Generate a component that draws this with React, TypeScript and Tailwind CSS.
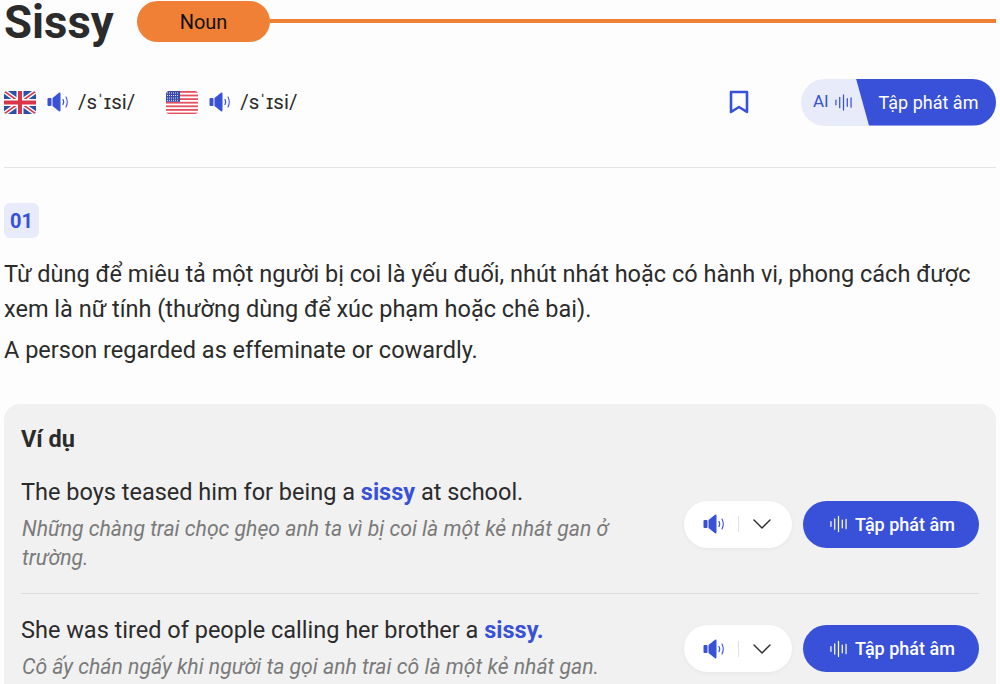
import React from 'react';

const BLUE = '#3851d8';

const Speaker = ({ className = 'w-[23px] h-[20px]' }: { className?: string }) => (
  <svg viewBox="0 0 23 20" className={className} fill="none">
    <rect x="0.5" y="6" width="4" height="8" rx="1" fill={BLUE} />
    <path d="M5.5 6 L12 0.8 Q13.5 0 13.5 2 V18 Q13.5 20 12 19.2 L5.5 14 Z" fill={BLUE} />
    <path d="M16 7.5 Q17.5 10 16 12.5" stroke={BLUE} strokeWidth="1.3" strokeLinecap="round" />
    <path d="M19 5 Q21.5 10 19 15" stroke={BLUE} strokeWidth="1.1" strokeLinecap="round" />
  </svg>
);

const Wave = ({ color, className }: { color: string; className: string }) => (
  <svg viewBox="0 0 18 18" className={className} stroke={color} strokeWidth="1.3" strokeLinecap="round">
    <path d="M1 6.5v5M5 3.5v11M9 1v16M13 5v8M17 4v10" />
  </svg>
);

const UkFlag = () => (
  <svg viewBox="0 0 32 23" className="w-[32px] h-[23px]">
    <clipPath id="uk-clip">
      <rect width="32" height="23" rx="3.5" />
    </clipPath>
    <g clipPath="url(#uk-clip)">
      <rect width="32" height="23" fill="#2b4fa8" />
      <path d="M0 0 L32 23 M32 0 L0 23" stroke="#fff" strokeWidth="4.5" />
      <path d="M0 0 L32 23 M32 0 L0 23" stroke="#d8344a" strokeWidth="1.6" />
      <path d="M16 0 V23 M0 11.5 H32" stroke="#fff" strokeWidth="7" />
      <path d="M16 0 V23 M0 11.5 H32" stroke="#d8344a" strokeWidth="4" />
    </g>
  </svg>
);

const UsFlag = () => (
  <svg viewBox="0 0 32 23" className="w-[32px] h-[23px]">
    <clipPath id="us-clip">
      <rect width="32" height="23" rx="3.5" />
    </clipPath>
    <g clipPath="url(#us-clip)">
      <rect width="32" height="23" fill="#fff" />
      {[0, 3.6, 7.2, 10.8, 14.4, 18, 21.6].map((y) => (
        <rect key={y} y={y} width="32" height="1.8" fill="#e4525f" />
      ))}
      <rect width="14" height="10.8" fill="#3a4aa8" />
      <path d="M1 2h12M1 4.5h12M1 7h12M1 9.3h12" stroke="#dfe3f5" strokeWidth="1" strokeDasharray="1 1" />
    </g>
  </svg>
);

const Phonetic = () => (
  <span className="text-[20.5px] leading-none text-[#2b2b2b]">/sˈɪsi/</span>
);

const ExampleActions = () => (
  <div className="flex items-center gap-[11px] shrink-0">
    <div className="flex items-center w-[108px] h-[47px] bg-white rounded-full pl-[19px] shadow-[0_1px_4px_rgba(0,0,0,0.05)]">
      <Speaker />
      <div className="w-px h-[16px] bg-[#e2e2e2] ml-[12px] mr-[14px]" />
      <svg viewBox="0 0 18 10" className="w-[18px] h-[10px]" fill="none" stroke="#2b2b2b" strokeWidth="1.4" strokeLinecap="round" strokeLinejoin="round">
        <path d="M1 1 L9 9 L17 1" />
      </svg>
    </div>
    <button className="flex items-center justify-center gap-[8px] w-[176px] h-[47px] pl-[3px] rounded-full text-white text-[18px] font-medium bg-[#3851d8]">
      <Wave color="#ffffff" className="w-[17px] h-[18px]" />
      Tập phát âm
    </button>
  </div>
);

export default function App() {
  return (
    <div className="h-[684px] overflow-hidden bg-[#fdfdfd] pl-[4px] pr-[4px] font-['Roboto',sans-serif] text-[#2b2b2b]">
      {/* Word + part of speech */}
      <div className="flex items-start h-[46px]">
        <h1 className="text-[45.5px] font-bold leading-none w-[133px]">Sissy</h1>
        <div className="flex items-center justify-center w-[133px] h-[41px] mt-[1px] rounded-full bg-[#f08036] text-[#111] text-[20px]">
          Noun
        </div>
        <div className="flex-1 h-[4px] bg-[#f08036] mt-[19px]" />
      </div>

      {/* Pronunciation */}
      <div className="flex items-center h-[46px] mt-[34px] pb-[2px]">
        <div className="flex items-center">
          <UkFlag />
          <div className="ml-[11px] mr-[8px]"><Speaker /></div>
          <Phonetic />
        </div>
        <div className="flex items-center ml-[31px]">
          <UsFlag />
          <div className="ml-[11px] mr-[8px]"><Speaker /></div>
          <Phonetic />
        </div>
        <svg viewBox="0 0 20 24" className="w-[20px] h-[24px] ml-auto mr-[52px]" fill="none" stroke={BLUE} strokeWidth="2.6" strokeLinejoin="round">
          <path d="M2 2 H18 V22 L10 17 L2 22 Z" />
        </svg>
        <div className="relative flex items-center w-[195px] h-[47px] rounded-full bg-[#e8ebf9] overflow-hidden">
          <span className="flex items-center gap-[6px] pl-[12px] text-[17px] text-[#3851d8]">
            AI
            <Wave color={BLUE} className="w-[17px] h-[17px]" />
          </span>
          <div className="absolute inset-y-0 right-0 left-[55px] flex items-center justify-center pl-[5px] text-[18px] text-white bg-[#3851d8] [clip-path:polygon(0_0,100%_0,100%_100%,13px_100%)]">
            Tập phát âm
          </div>
        </div>
      </div>

      <div className="h-px bg-[#e4e4e4] mt-[41px]" />

      {/* Sense */}
      <div className="flex items-center justify-center w-[35px] h-[35px] mt-[35px] rounded-[6px] bg-[#e8ebf9] text-[#3851d8] text-[20px] font-bold">
        01
      </div>
      <p className="text-[23.5px] leading-[35px] mt-[19px]">
        Từ dùng để miêu tả một người bị coi là yếu đuối, nhút nhát hoặc có hành vi, phong cách được xem là nữ tính (thường dùng để xúc phạm hoặc chê bai).
      </p>
      <p className="text-[23.5px] leading-[35px] mt-[6px]">A person regarded as effeminate or cowardly.</p>

      {/* Examples */}
      <div className="mt-[36px] rounded-[16px] bg-[#f1f1f1] px-[17px] pt-[20px] pb-[40px]">
        <h2 className="text-[23.5px] font-bold leading-[30px]">Ví dụ</h2>
        <div className="flex items-center justify-between pt-[22px] pb-[21px] border-b border-[#dcdcdc]">
          <div className="w-[600px]">
            <p className="text-[23.5px] leading-[32px]">
              The boys teased him for being a <span className="font-bold text-[#3851d8]">sissy</span> at school.
            </p>
            <p className="text-[21.2px] leading-[29px] italic text-[#7a7a7a] mt-[6px] ml-[1px]">
              Những chàng trai chọc ghẹo anh ta vì bị coi là một kẻ nhát gan ở trường.
            </p>
          </div>
          <ExampleActions />
        </div>
        <div className="flex items-start justify-between pt-[20px]">
          <div className="w-[640px]">
            <p className="text-[23.5px] leading-[32px]">
              She was tired of people calling her brother a <span className="font-bold text-[#3851d8]">sissy.</span>
            </p>
            <p className="text-[21.2px] leading-[29px] italic text-[#7a7a7a] mt-[6px] ml-[1px]">
              Cô ấy chán ngấy khi người ta gọi anh trai cô là một kẻ nhát gan.
            </p>
          </div>
          <div className="mt-[11px]">
            <ExampleActions />
          </div>
        </div>
      </div>
    </div>
  );
}
